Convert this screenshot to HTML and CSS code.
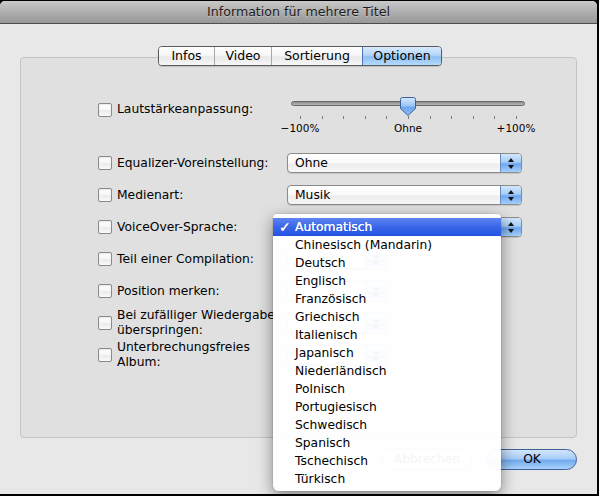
FILE: index.html
```html
<!DOCTYPE html>
<html lang="de">
<head>
<meta charset="utf-8">
<title>Information für mehrere Titel</title>
<link rel="stylesheet" href="styles.css">
</head>
<body>
<div class="window">
  <div class="titlebar">Information für mehrere Titel</div>
  <div class="content">
    <div class="tabs">
      <div class="seg">
        <div class="tab t1">Infos</div>
        <div class="tab t2">Video</div>
        <div class="tab t3">Sortierung</div>
        <div class="tab t4 sel">Optionen</div>
      </div>
    </div>
    <div class="box">
      <div class="row row-slider">
        <div class="opt"><span class="cb"></span><span class="lbl">Lautstärkeanpassung:</span></div>
        <div class="slider">
          <div class="track"></div>
          <svg class="thumb" width="16" height="19" viewBox="0 0 16 19">
            <defs>
              <linearGradient id="tg" x1="0" y1="0" x2="0" y2="1">
                <stop offset="0" stop-color="#d9eafd"/>
                <stop offset="0.45" stop-color="#9cc6f6"/>
                <stop offset="0.55" stop-color="#6fa6ee"/>
                <stop offset="1" stop-color="#8cc0f8"/>
              </linearGradient>
            </defs>
            <path d="M2.5 0.5 H13.5 Q15.5 0.5 15.5 2.5 V11.5 L8 18.5 L0.5 11.5 V2.5 Q0.5 0.5 2.5 0.5 Z" fill="url(#tg)" stroke="#3d5f99" stroke-width="1"/>
          </svg>
          <div class="ticks"><i></i><i></i><i></i><i></i><i></i><i></i><i></i><i></i><i></i><i></i><i></i></div>
          <div class="scale"><span>−100%</span><span>Ohne</span><span>+100%</span></div>
        </div>
      </div>
      <div class="row">
        <div class="opt"><span class="cb"></span><span class="lbl">Equalizer-Voreinstellung:</span></div>
        <div class="popup wide"><span class="ptext">Ohne</span><span class="parrow"></span></div>
      </div>
      <div class="row">
        <div class="opt"><span class="cb"></span><span class="lbl">Medienart:</span></div>
        <div class="popup wide"><span class="ptext">Musik</span><span class="parrow"></span></div>
      </div>
      <div class="row">
        <div class="opt"><span class="cb"></span><span class="lbl">VoiceOver-Sprache:</span></div>
        <div class="popup wide"><span class="ptext">Automatisch</span><span class="parrow"></span></div>
      </div>
      <div class="row">
        <div class="opt"><span class="cb"></span><span class="lbl">Teil einer Compilation:</span></div>
        <div class="popup small"><span class="ptext"></span><span class="parrow"></span></div>
      </div>
      <div class="row">
        <div class="opt"><span class="cb"></span><span class="lbl">Position merken:</span></div>
        <div class="popup small"><span class="ptext"></span><span class="parrow"></span></div>
      </div>
      <div class="row">
        <div class="opt"><span class="cb"></span><span class="lbl">Bei zufälliger Wiedergabe<br>überspringen:</span></div>
        <div class="popup small"><span class="ptext"></span><span class="parrow"></span></div>
      </div>
      <div class="row">
        <div class="opt"><span class="cb"></span><span class="lbl">Unterbrechungsfreies<br>Album:</span></div>
        <div class="popup small"><span class="ptext"></span><span class="parrow"></span></div>
      </div>
    </div>
    <div class="buttons">
      <div class="btn">Abbrechen</div>
      <div class="btn ok">OK</div>
    </div>
  </div>

  <div class="menu">
    <div class="mi hl"><span class="ck">✓</span>Automatisch</div>
    <div class="mi"><span class="ck"></span>Chinesisch (Mandarin)</div>
    <div class="mi"><span class="ck"></span>Deutsch</div>
    <div class="mi"><span class="ck"></span>Englisch</div>
    <div class="mi"><span class="ck"></span>Französisch</div>
    <div class="mi"><span class="ck"></span>Griechisch</div>
    <div class="mi"><span class="ck"></span>Italienisch</div>
    <div class="mi"><span class="ck"></span>Japanisch</div>
    <div class="mi"><span class="ck"></span>Niederländisch</div>
    <div class="mi"><span class="ck"></span>Polnisch</div>
    <div class="mi"><span class="ck"></span>Portugiesisch</div>
    <div class="mi"><span class="ck"></span>Schwedisch</div>
    <div class="mi"><span class="ck"></span>Spanisch</div>
    <div class="mi"><span class="ck"></span>Tschechisch</div>
    <div class="mi"><span class="ck"></span>Türkisch</div>
  </div>
</div>
</body>
</html>
```

FILE: styles.css
```css
* { box-sizing: border-box; }

html, body {
  margin: 0;
  padding: 0;
  background: #000;
  width: 599px;
  height: 496px;
  overflow: hidden;
}

body {
  font-family: "DejaVu Sans", "Noto Sans", sans-serif;
  font-size: 12.3px;
  color: #000;
}

.window {
  position: relative;
  margin-top: 1px;
  width: 597px;
  height: 493px;
  background: #e8e8e8;
  border-radius: 5px 5px 0 0;
  overflow: hidden;
}

.titlebar {
  height: 23px;
  line-height: 22px;
  text-align: center;
  font-size: 12.6px;
  color: #1f1b19;
  background: linear-gradient(#c9c9c9, #a9a9a9 60%, #989898);
  border-bottom: 1px solid #4d4d4d;
  text-shadow: 0 1px 0 rgba(255, 255, 255, 0.35);
}

.content {
  padding: 0 20px;
}

/* segmented tabs */
.tabs {
  display: flex;
  justify-content: center;
  padding-left: 3px;
  margin-top: 22px;
  height: 20px;
  position: relative;
  z-index: 1;
}

.seg {
  display: flex;
  height: 20px;
  border: 1px solid #5a5a5a;
  border-radius: 4px;
  overflow: hidden;
  box-shadow: 0 1px 1px rgba(0, 0, 0, 0.15);
}

.tab {
  height: 18px;
  line-height: 18px;
  text-align: center;
  font-size: 12.5px;
  background: linear-gradient(#ffffff, #f7f7f7 45%, #e9e9e9 55%, #f6f6f6);
  border-left: 1px solid #a7a7a7;
}

.t1 { width: 55px; border-left: none; }
.t2 { width: 57px; }
.t3 { width: 91px; }
.t4 { width: 79px; }

.tab.sel {
  background: linear-gradient(#d8eafc, #b4d6f8 45%, #8dc0f4 55%, #b5dafc);
  border-left: 1px solid #4f76b2;
}

/* group box */
.box {
  margin-top: -9px;
  height: 381px;
  background: #e0e0e0;
  border: 1px solid #c3c3c3;
  border-radius: 4px;
  padding: 37px 0 0 77px;
}

.row {
  display: flex;
  align-items: center;
  height: 32px;
}

.row-slider {
  height: 52px;
  align-items: flex-start;
}

.row-slider .opt {
  padding-top: 7px;
}

.opt {
  width: 189px;
  display: flex;
  align-items: center;
  gap: 5px;
}

.cb {
  flex: none;
  width: 14px;
  height: 14px;
  border: 1px solid #8a8a8a;
  border-radius: 2px;
  background: linear-gradient(#ffffff, #f6f6f6 50%, #ebebeb 55%, #fafafa);
  box-shadow: inset 0 1px 1px rgba(0, 0, 0, 0.08);
}

.lbl {
  line-height: 15px;
  white-space: nowrap;
}

/* slider */
.slider {
  position: relative;
  width: 250px;
}

.track {
  margin: 6px 0 0 4px;
  width: 234px;
  height: 5px;
  border: 1px solid #676767;
  border-radius: 3px;
  background: linear-gradient(#8c8c8c, #b8b8b8);
}

.thumb {
  position: absolute;
  left: 113px;
  top: 2px;
}

.ticks {
  margin: 10px 0 0 13px;
  width: 217px;
  height: 3px;
  display: flex;
  justify-content: space-between;
}

.ticks i {
  width: 1px;
  height: 3px;
  background: #7d7d7d;
}

.scale {
  margin: 3px 0 0 -7px;
  width: 256px;
  display: flex;
  justify-content: space-between;
}

.scale span {
  width: 40px;
  text-align: center;
  font-size: 10.5px;
  line-height: 12px;
}

/* popup buttons */
.popup {
  display: flex;
  height: 20px;
  border: 1px solid #8b8b8b;
  border-radius: 4px;
  background: linear-gradient(#ffffff, #f9f9f9 50%, #ececec 55%, #f7f7f7);
  box-shadow: 0 1px 1px rgba(0, 0, 0, 0.12);
  overflow: hidden;
}

.popup.wide { width: 235px; }
.popup.small { width: 100px; }

.ptext {
  flex: 1;
  padding-left: 7px;
  line-height: 18px;
}

.parrow {
  width: 21px;
  display: flex;
  flex-direction: column;
  align-items: center;
  justify-content: center;
  gap: 3px;
  border-left: 1px solid #6a8cc4;
  background: linear-gradient(#d3e6fc, #a7cdf7 45%, #6ea7ee 55%, #a3d0fb);
}

.parrow::before,
.parrow::after {
  content: "";
  width: 0;
  height: 0;
  border-left: 3px solid transparent;
  border-right: 3px solid transparent;
}

.parrow::before { border-bottom: 4px solid #111; }
.parrow::after { border-top: 4px solid #111; }

/* bottom buttons */
.buttons {
  display: flex;
  justify-content: flex-end;
  gap: 15px;
  margin-top: 11px;
}

.btn {
  width: 90px;
  height: 21px;
  line-height: 19px;
  text-align: center;
  border: 1px solid #8c8c8c;
  border-radius: 11px;
  background: linear-gradient(#ffffff, #f6f6f6 50%, #e6e6e6 55%, #f7f7f7);
}

.btn.ok {
  border-color: #3f5f98;
  background: linear-gradient(#d3e6fc, #a8cdf7 45%, #72a9ef 55%, #a9d4fd);
}

/* pop-up menu */
.menu {
  position: absolute;
  left: 273px;
  top: 213px;
  width: 228px;
  height: 277px;
  padding-top: 4px;
  background: rgba(255, 255, 255, 0.955);
  border-radius: 4px 4px 6px 6px;
  box-shadow: 0 5px 16px rgba(0, 0, 0, 0.45), 0 0 0 1px rgba(0, 0, 0, 0.06);
  z-index: 2;
}

.mi {
  display: flex;
  height: 18px;
  line-height: 18px;
  padding-left: 6px;
  white-space: nowrap;
}

.ck {
  width: 16px;
  flex: none;
  font-size: 14px;
  font-weight: bold;
}

.mi.hl {
  color: #fff;
  background: linear-gradient(#5f84f2, #3a66e8 50%, #2253e2);
  text-shadow: 0 0 0.4px #fff;
}
```
